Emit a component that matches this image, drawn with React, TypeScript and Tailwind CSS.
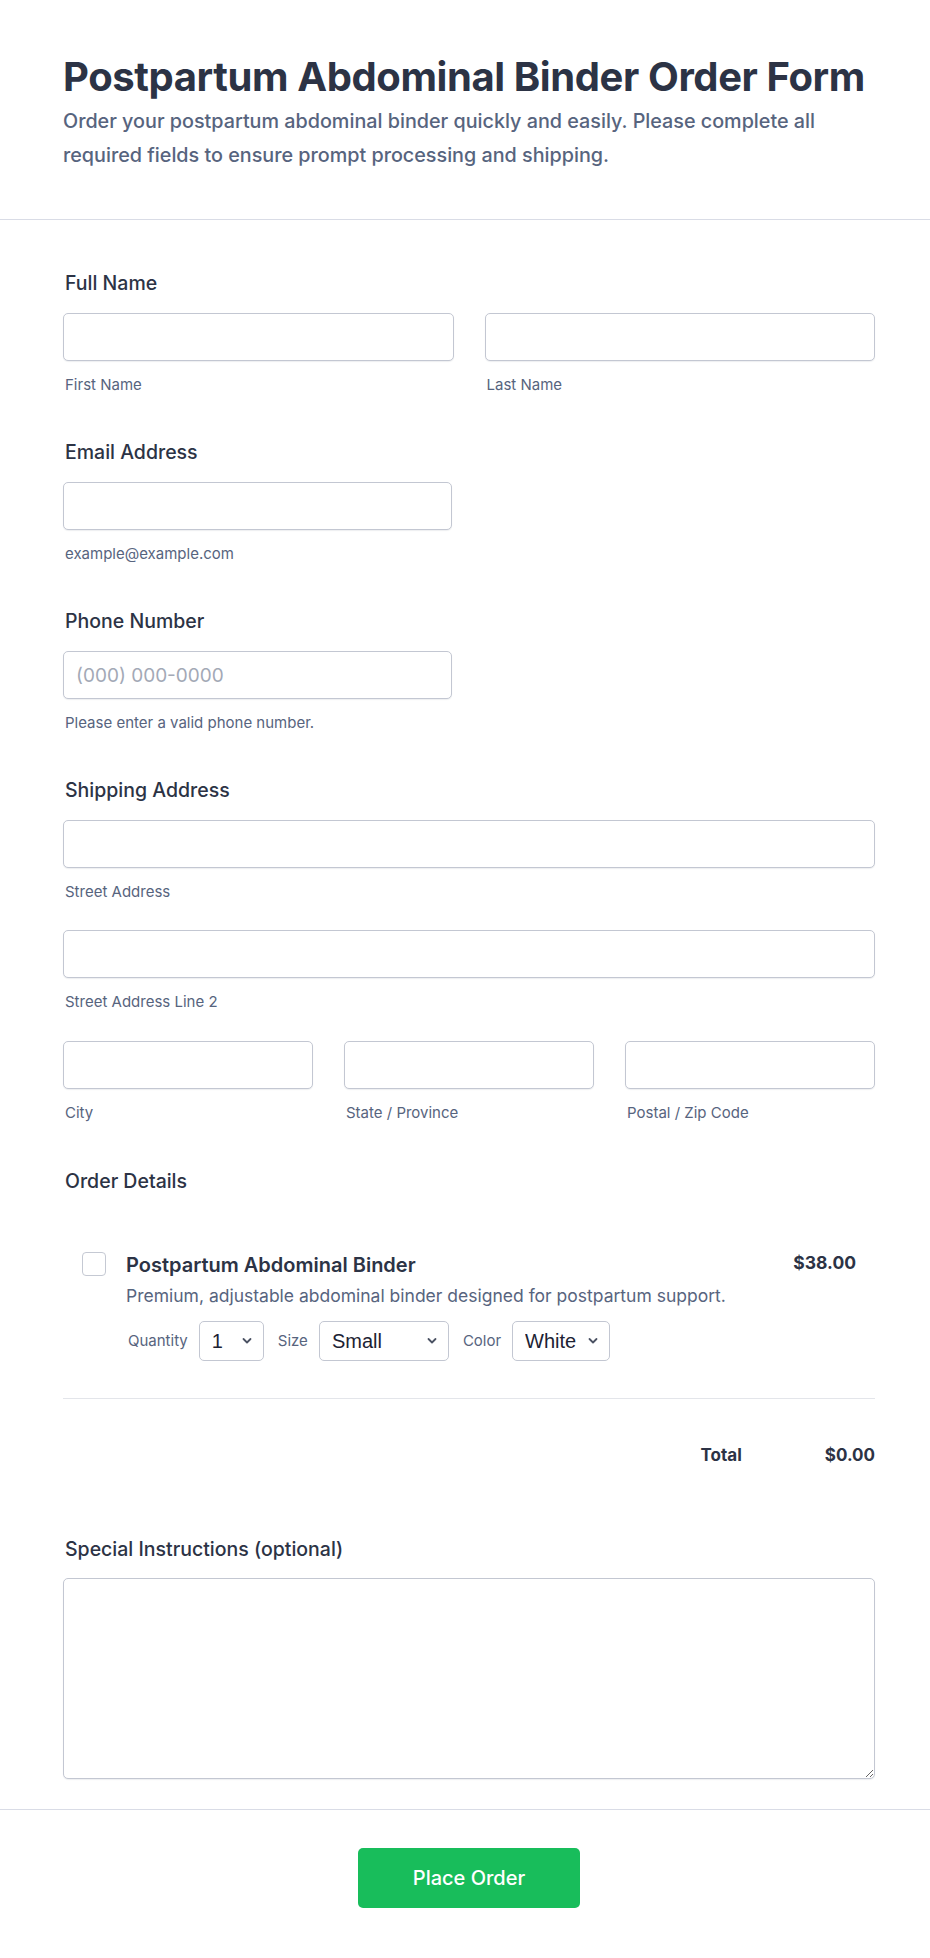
import React from "react";

const fieldInput =
  "block h-12 w-full rounded-[5px] border border-[#c3c7d2] bg-white px-3 text-[19px] text-[#2c3345] shadow-[0_1px_1px_rgba(40,50,80,0.08)] outline-none placeholder:text-[#a3a9b6]";

function Label({ children }: { children: React.ReactNode }) {
  return (
    <div className="pl-[2px] text-[19.5px] font-medium leading-6 text-[#2c3345]">
      {children}
    </div>
  );
}

function Sub({ children }: { children: React.ReactNode }) {
  return (
    <div className="mt-4 pl-[2px] text-[15px] leading-4 text-[#57647e]">
      {children}
    </div>
  );
}

function Chevron() {
  return (
    <svg
      className="pointer-events-none absolute right-[12px] top-1/2 -translate-y-1/2"
      width="10"
      height="7"
      viewBox="0 0 10 7"
      fill="none"
    >
      <path
        d="M1.5 1.5L5 5L8.5 1.5"
        stroke="#4b5263"
        strokeWidth="1.8"
        strokeLinecap="round"
        strokeLinejoin="round"
      />
    </svg>
  );
}

function Pick({
  width,
  options,
}: {
  width: string;
  options: string[];
}) {
  return (
    <div className={`relative ${width}`}>
      <select className="h-10 w-full appearance-none rounded-[5px] border border-[#c3c7d2] bg-white pl-[12px] font-['Liberation_Sans',Arial,sans-serif] text-[20px] text-[#1c2233] outline-none">
        {options.map((o) => (
          <option key={o}>{o}</option>
        ))}
      </select>
      <Chevron />
    </div>
  );
}

export default function App() {
  return (
    <div className="min-h-screen bg-white font-['Inter','Noto_Sans',sans-serif] text-[#2c3345]">
      {/* heading */}
      <header className="border-b border-[#d9dce6] pb-[47px] pl-[63px] pr-[55px] pt-[53px]">
        <h1 className="text-[40px] font-bold leading-[48px] tracking-[-0.4px] text-[#2c3345]">
          Postpartum Abdominal Binder Order Form
        </h1>
        <p className="mt-[3px] text-[19.75px] font-medium leading-[34px] text-[#57647e]">
          Order your postpartum abdominal binder quickly and easily. Please complete all
          required fields to ensure prompt processing and shipping.
        </p>
      </header>

      <form
        className="border-b border-[#d9dce6] pb-[30px] pl-[63px] pr-[55px] pt-[51px]"
        onSubmit={(e) => e.preventDefault()}
      >
        {/* name */}
        <section>
          <Label>Full Name</Label>
          <div className="mt-[18px] grid grid-cols-2 gap-[31px]">
            <div>
              <input className={fieldInput} />
              <Sub>First Name</Sub>
            </div>
            <div>
              <input className={fieldInput} />
              <Sub>Last Name</Sub>
            </div>
          </div>
        </section>

        {/* email */}
        <section className="mt-[47px]">
          <Label>Email Address</Label>
          <div className="mt-[18px] w-[389px]">
            <input type="email" className={fieldInput} />
            <Sub>example@example.com</Sub>
          </div>
        </section>

        {/* phone */}
        <section className="mt-[47px]">
          <Label>Phone Number</Label>
          <div className="mt-[18px] w-[389px]">
            <input className={fieldInput} placeholder="(000) 000-0000" />
            <Sub>Please enter a valid phone number.</Sub>
          </div>
        </section>

        {/* shipping address */}
        <section className="mt-[47px]">
          <Label>Shipping Address</Label>
          <div className="mt-[18px]">
            <input className={fieldInput} />
            <Sub>Street Address</Sub>
          </div>
          <div className="mt-[30px]">
            <input className={fieldInput} />
            <Sub>Street Address Line 2</Sub>
          </div>
          <div className="mt-[31px] grid grid-cols-3 gap-[31px]">
            <div>
              <input className={fieldInput} />
              <Sub>City</Sub>
            </div>
            <div>
              <input className={fieldInput} />
              <Sub>State / Province</Sub>
            </div>
            <div>
              <input className={fieldInput} />
              <Sub>Postal / Zip Code</Sub>
            </div>
          </div>
        </section>

        {/* order */}
        <section className="mt-[48px]">
          <Label>Order Details</Label>
          <div className="mt-[58px] flex items-start gap-5 px-[19px]">
            <input
              type="checkbox"
              className="mt-[1px] h-6 w-6 shrink-0 appearance-none rounded-[4px] border border-[#c5c9d3] bg-white"
            />
            <div className="flex-1">
              <div className="flex items-start justify-between">
                <div className="text-[20px] font-semibold leading-7 text-[#2c3345]">
                  Postpartum Abdominal Binder
                </div>
                <div className="text-[17.5px] font-bold leading-6 text-[#2c3345]">
                  $38.00
                </div>
              </div>
              <div className="mt-[5px] text-[17.5px] leading-6 text-[#57647e]">
                Premium, adjustable abdominal binder designed for postpartum support.
              </div>
              <div className="mt-[13px] flex items-center text-[15px] text-[#57647e]">
                <span className="ml-[2px] mr-[11px]">Quantity</span>
                <Pick width="w-[65px]" options={["1", "2", "3", "4", "5"]} />
                <span className="ml-[14px] mr-[11px]">Size</span>
                <Pick
                  width="w-[130px]"
                  options={["Small", "Medium", "Large", "X-Large"]}
                />
                <span className="ml-[14px] mr-[11px]">Color</span>
                <Pick width="w-[98px]" options={["White", "Black", "Nude"]} />
              </div>
            </div>
          </div>
          <div className="mt-[37px] border-t border-[#e3e5ea]" />
          <div className="mt-[44px] flex items-center justify-end text-[17px] font-bold leading-6 text-[#2c3345]">
            <span>Total</span>
            <span className="ml-[83px]">$0.00</span>
          </div>
        </section>

        {/* notes */}
        <section className="mt-[70px]">
          <Label>Special Instructions (optional)</Label>
          <textarea className="mt-[17px] block h-[201px] w-full rounded-[5px] border border-[#c3c7d2] bg-white p-3 text-[16px] shadow-[0_1px_1px_rgba(40,50,80,0.08)] outline-none" />
        </section>
      </form>

      <div className="flex justify-center pb-[49px] pl-[63px] pr-[55px] pt-[38px]">
        <button
          type="button"
          className="h-[60px] w-[222px] rounded-[5px] bg-[#18bd5b] text-[20px] font-medium text-white"
        >
          Place Order
        </button>
      </div>
    </div>
  );
}
